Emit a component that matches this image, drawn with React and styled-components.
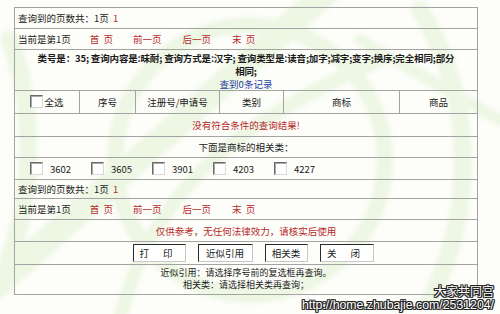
import React from 'react';
import styled, { createGlobalStyle } from 'styled-components';

const GlobalStyle = createGlobalStyle`
  html, body {
    margin: 0;
    padding: 0;
    background: #fdfdf9;
  }
  body {
    width: 500px;
    height: 314px;
    overflow: hidden;
    font-family: "Noto Sans CJK SC", "Noto Sans", sans-serif;
  }
`;

const Page = styled.div`
  position: relative;
  width: 500px;
  height: 314px;
  padding: 7px 0 0 14px;
  box-sizing: border-box;
  overflow: hidden;
`;

const Backdrop = styled.svg`
  position: absolute;
  left: 0;
  top: 0;
  width: 500px;
  height: 314px;
  pointer-events: none;
`;

const Frame = styled.div`
  position: relative;
  width: 464px;
  border: 1px solid #a3a3a3;
  box-sizing: border-box;
  display: flex;
  flex-direction: column;
  font-size: 9.5px;
  color: #1a1a1a;
`;

const Row = styled.div`
  display: flex;
  align-items: center;
  justify-content: ${(p) => (p.$center ? 'center' : 'flex-start')};
  height: ${(p) => p.$h}px;
  padding: 0 3px;
  box-sizing: border-box;
  border-top: ${(p) => (p.$first ? 'none' : '1px solid #a3a3a3')};
`;

const Red = styled.span`
  color: #b52a2a;
`;

const NavLink = styled.span`
  color: #b52a2a;
  margin-left: ${(p) => p.$ml}px;
  white-space: pre;
`;

const InfoBlock = styled.div`
  border-top: 1px solid #a3a3a3;
  height: 41px;
  box-sizing: border-box;
  padding: 2px 3px 0;
  text-align: center;
  line-height: 12.5px;
  font-weight: bold;
`;

const InfoLine = styled.div`
  white-space: nowrap;
  letter-spacing: -0.15px;
`;

const BlueLink = styled.div`
  color: #1f3ea6;
  font-weight: normal;
  margin-top: 1px;
`;

const HeaderGrid = styled.div`
  display: grid;
  grid-template-columns: 64px 56px 84px 64px 116px 78px;
  height: 23px;
  border-top: 1px solid #a3a3a3;
  box-sizing: border-box;
`;

const HeadCell = styled.div`
  display: flex;
  align-items: center;
  justify-content: center;
  border-left: ${(p) => (p.$first ? 'none' : '1px solid #a3a3a3')};
  gap: 1px;
`;

const Check = styled.span`
  display: inline-block;
  width: 11px;
  height: 11px;
  background: #fff;
  border-style: solid;
  border-width: 1px;
  border-color: #6a6a6a #d8d8d8 #d8d8d8 #6a6a6a;
  box-shadow: inset 1px 1px 0 #a8a8a8;
  margin-top: ${(p) => p.$mt || 0}px;
`;

const CodeItem = styled.span`
  display: inline-flex;
  align-items: center;
  gap: 7px;
  width: 61px;
`;

const CodeList = styled.div`
  display: flex;
  align-items: center;
  height: 22px;
  padding-left: 15px;
  border-top: 1px solid #a3a3a3;
  box-sizing: border-box;
`;

const ButtonBar = styled.div`
  display: flex;
  align-items: center;
  justify-content: center;
  height: 23px;
  gap: 12px;
  padding-left: 14px;
  border-top: 1px solid #a3a3a3;
  box-sizing: border-box;
`;

const Button = styled.span`
  display: inline-flex;
  align-items: center;
  justify-content: center;
  width: ${(p) => p.$w}px;
  height: 16px;
  background: #fff;
  border-style: solid;
  border-width: 1px;
  border-color: #2a2a2a #c8c8c8 #c8c8c8 #2a2a2a;
  letter-spacing: ${(p) => (p.$spaced ? '6px' : '0')};
  font-size: 9.5px;
`;

const Notes = styled.div`
  border-top: 1px solid #a3a3a3;
  height: 30px;
  box-sizing: border-box;
  padding-top: 2px;
  text-align: center;
  line-height: 12px;
  font-size: 9px;
`;

const Stamp = styled.div`
  position: absolute;
  right: 6px;
  bottom: 2px;
  text-align: right;
  color: #fff;
  text-shadow:
    1px 0 0 #222, -1px 0 0 #222, 0 1px 0 #222, 0 -1px 0 #222,
    1px 1px 0 #222, -1px -1px 0 #222, 1px -1px 0 #222, -1px 1px 0 #222;
`;

const StampName = styled.div`
  font-family: "Noto Sans CJK SC", sans-serif;
  font-size: 12px;
  line-height: 14px;
`;

const StampUrl = styled.div`
  font-family: "Liberation Sans", Arial, sans-serif;
  font-size: 12.3px;
  line-height: 14px;
`;

const codes = ['3602', '3605', '3901', '4203', '4227'];

function Pager({ first, h }) {
  return (
    <>
      <Row $h={h} $first={first}>
        查询到的页数共：1页&nbsp;&nbsp;<Red>1</Red>
      </Row>
      <Row $h={21}>
        当前是第1页
        <NavLink $ml={19}>首  页</NavLink>
        <NavLink $ml={20}>前一页</NavLink>
        <NavLink $ml={21}>后一页</NavLink>
        <NavLink $ml={21}>末  页</NavLink>
      </Row>
    </>
  );
}

export default function App() {
  return (
    <>
      <GlobalStyle />
      <Page>
        <Backdrop viewBox="0 0 500 314">
          <defs>
            <filter id="soft">
              <feGaussianBlur stdDeviation="2" />
            </filter>
          </defs>
          <g fill="none" stroke="#edf7e4" strokeLinecap="round" filter="url(#soft)">
            <path d="M-20 300 L340 -20" strokeWidth="26" />
            <path d="M120 320 C 150 190, 240 120, 380 60" strokeWidth="14" />
            <circle cx="250" cy="160" r="135" strokeWidth="16" />
            <path d="M10 40 C 40 120, 30 220, 0 280" strokeWidth="18" />
            <path d="M420 10 C 470 90, 480 200, 430 300" strokeWidth="18" />
            <path d="M360 40 L500 120" strokeWidth="12" />
          </g>
        </Backdrop>
        <Frame>
          <Pager first h={20} />
          <InfoBlock>
            <InfoLine>
              类号是：35; 查询内容是:昧耐; 查询方式是:汉字; 查询类型是:读音;加字;减字;变字;换序;完全相同;部分
            </InfoLine>
            <InfoLine>相同;</InfoLine>
            <BlueLink>查到0条记录</BlueLink>
          </InfoBlock>
          <HeaderGrid>
            <HeadCell $first>
              <Check $mt={-2} />
              全选
            </HeadCell>
            <HeadCell>序号</HeadCell>
            <HeadCell>注册号/申请号</HeadCell>
            <HeadCell>类别</HeadCell>
            <HeadCell>商标</HeadCell>
            <HeadCell>商品</HeadCell>
          </HeaderGrid>
          <Row $h={23} $center>
            <Red>没有符合条件的查询结果!</Red>
          </Row>
          <Row $h={21} $center>
            下面是商标的相关类：
          </Row>
          <CodeList>
            {codes.map((c) => (
              <CodeItem key={c}>
                <Check />
                {c}
              </CodeItem>
            ))}
          </CodeList>
          <Pager h={19} />
          <Row $h={22} $center>
            <Red>仅供参考，无任何法律效力，请核实后使用</Red>
          </Row>
          <ButtonBar>
            <Button $w={51} $spaced>打 印</Button>
            <Button $w={53}>近似引用</Button>
            <Button $w={41}>相关类</Button>
            <Button $w={52} $spaced>关 闭</Button>
          </ButtonBar>
          <Notes>
            <div>近似引用：请选择序号前的复选框再查询。</div>
            <div>相关类：请选择相关类再查询；</div>
          </Notes>
        </Frame>
        <Stamp>
          <StampName>大家共同宫</StampName>
          <StampUrl>http://home.zhubajie.com/2531204/</StampUrl>
        </Stamp>
      </Page>
    </>
  );
}
